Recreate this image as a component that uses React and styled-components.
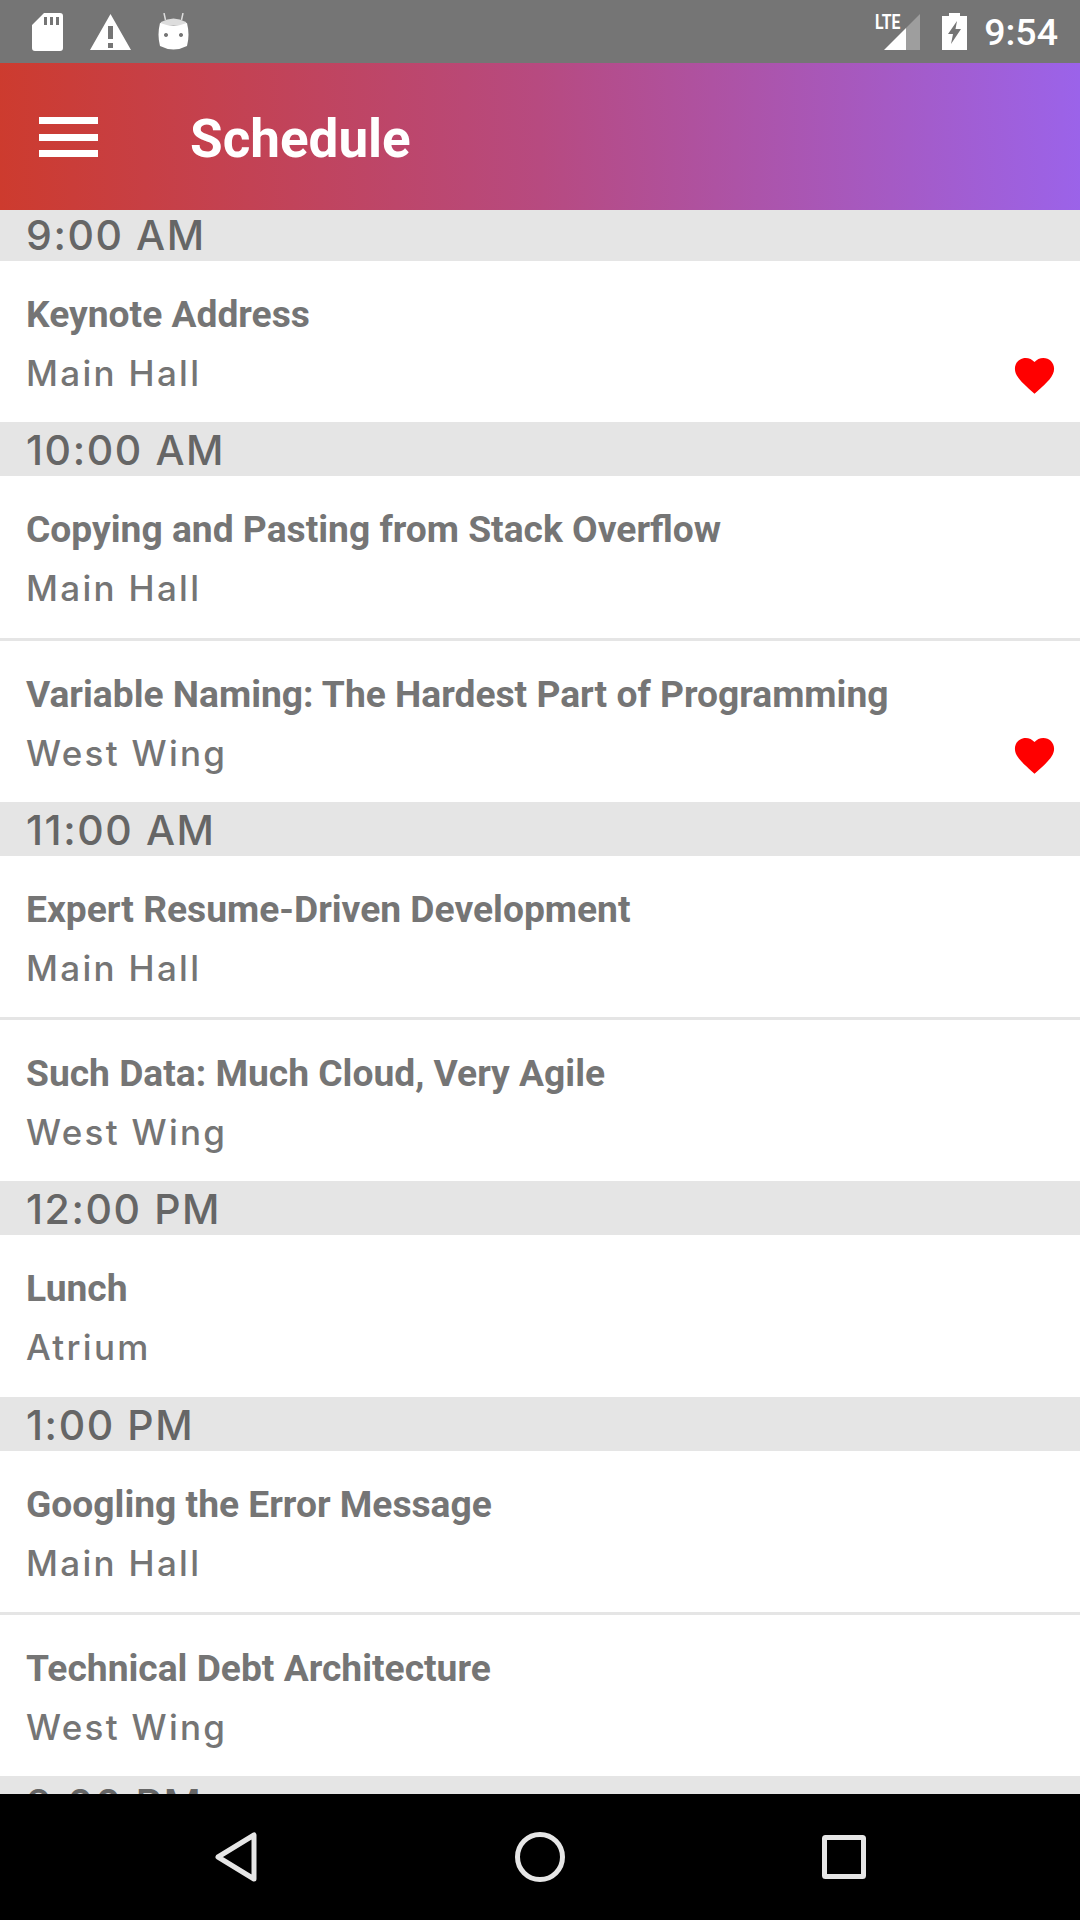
import React from "react";
import styled, { createGlobalStyle } from "styled-components";

const schedule = [
  {
    time: "9:00 AM",
    talks: [{ title: "Keynote Address", room: "Main Hall", liked: true }],
  },
  {
    time: "10:00 AM",
    talks: [
      { title: "Copying and Pasting from Stack Overflow", room: "Main Hall" },
      { title: "Variable Naming: The Hardest Part of Programming", room: "West Wing", liked: true },
    ],
  },
  {
    time: "11:00 AM",
    talks: [
      { title: "Expert Resume-Driven Development", room: "Main Hall" },
      { title: "Such Data: Much Cloud, Very Agile", room: "West Wing" },
    ],
  },
  {
    time: "12:00 PM",
    talks: [{ title: "Lunch", room: "Atrium" }],
  },
  {
    time: "1:00 PM",
    talks: [
      { title: "Googling the Error Message", room: "Main Hall" },
      { title: "Technical Debt Architecture", room: "West Wing" },
    ],
  },
  {
    time: "2:00 PM",
    talks: [],
  },
];

function SdCardIcon() {
  return (
    <svg width="31" height="38" viewBox="0 0 31 38">
      <path
        fillRule="evenodd"
        fill="#fff"
        d="M12 0H28a3 3 0 0 1 3 3V35a3 3 0 0 1-3 3H3a3 3 0 0 1-3-3V12ZM12 4V12H15V4ZM18 4V12H21V4ZM24 4V12H27V4Z"
      />
    </svg>
  );
}

function WarningIcon() {
  return (
    <svg width="41" height="36" viewBox="0 0 41 36">
      <path
        fillRule="evenodd"
        fill="#fff"
        d="M20.5 0L41 36H0ZM18 12V25H23V12ZM18 29V34H23V29Z"
      />
    </svg>
  );
}

function AndroidIcon() {
  return (
    <svg width="31" height="38" viewBox="0 0 31 38">
      <path d="M6 0L7.5 7M25 0L23.5 7" stroke="#ddd" strokeWidth="1.5" fill="none" />
      <path fill="#ddd" d="M3 9Q15.5 2 28 9L29 12H2Z" />
      <path
        fillRule="evenodd"
        fill="#fff"
        d="M2 10Q15.5 15 29 10Q32 22 29 33Q15.5 40 2 33Q-1 22 2 10ZM8 20a2 2 0 1 0 .01 0ZM23 20a2 2 0 1 0 .01 0Z"
      />
    </svg>
  );
}

function SignalIcon() {
  return (
    <svg width="36" height="36" viewBox="0 0 36 36">
      <path fill="#fff" opacity="0.3" d="M36 0V36H22V14Z" />
      <path fill="#fff" d="M22 14V36H0Z" />
    </svg>
  );
}

function BatteryIcon() {
  return (
    <svg width="25" height="37" viewBox="0 0 25 37">
      <path
        fillRule="evenodd"
        fill="#fff"
        d="M7 0H18V3H25V37H0V3H7ZM15 8L6 21H11L9 31L19 16H13.5Z"
      />
    </svg>
  );
}

function MenuIcon() {
  return (
    <svg width="59" height="40" viewBox="0 0 59 40">
      <rect y="0" width="59" height="7" fill="#fff" />
      <rect y="17" width="59" height="7" fill="#fff" />
      <rect y="33" width="59" height="7" fill="#fff" />
    </svg>
  );
}

function HeartIcon() {
  return (
    <svg width="47" height="47" viewBox="0 0 24 24">
      <path
        fill="#ff0000"
        d="M12 21.35l-1.45-1.32C5.4 15.36 2 12.28 2 8.5 2 5.42 4.42 3 7.5 3c1.74 0 3.41.81 4.5 2.09C13.09 3.81 14.76 3 16.5 3 19.58 3 22 5.42 22 8.5c0 3.78-3.4 6.86-8.55 11.54L12 21.35z"
      />
    </svg>
  );
}

function App() {
  return (
    <>
      <GlobalStyle />
      <Screen>
        <StatusBar>
          <StatusGroup>
            <SdCardIcon />
            <WarningIcon />
            <AndroidIcon />
          </StatusGroup>
          <StatusRight>
            <SignalWrap>
              <LteLabel>LTE</LteLabel>
              <SignalIcon />
            </SignalWrap>
            <BatteryIcon />
            <Clock>9:54</Clock>
          </StatusRight>
        </StatusBar>

        <Header>
          <MenuIcon />
          <Title>Schedule</Title>
        </Header>

        <ListViewport>
          <List>
            {schedule.map((section) => (
              <section key={section.time}>
                <SectionHeader>{section.time}</SectionHeader>
                {section.talks.map((talk, i) => (
                  <Talk key={talk.title} divided={i > 0}>
                    <TalkText>
                      <TalkTitle>{talk.title}</TalkTitle>
                      <TalkRoom>{talk.room}</TalkRoom>
                    </TalkText>
                    {talk.liked && (
                      <HeartWrap>
                        <HeartIcon />
                      </HeartWrap>
                    )}
                  </Talk>
                ))}
              </section>
            ))}
          </List>
        </ListViewport>

        <NavBar>
          <NavButton>
            <svg width="42" height="50" viewBox="0 0 42 50">
              <path
                d="M39 3V47L3 25Z"
                fill="none"
                stroke="#e6e6e6"
                strokeWidth="5"
                strokeLinejoin="round"
              />
            </svg>
          </NavButton>
          <NavButton>
            <svg width="50" height="50" viewBox="0 0 50 50">
              <circle cx="25" cy="25" r="22.5" fill="none" stroke="#e6e6e6" strokeWidth="5" />
            </svg>
          </NavButton>
          <NavButton>
            <svg width="44" height="44" viewBox="0 0 44 44">
              <rect
                x="2.5"
                y="2.5"
                width="39"
                height="39"
                rx="1"
                fill="none"
                stroke="#e6e6e6"
                strokeWidth="5"
              />
            </svg>
          </NavButton>
        </NavBar>
      </Screen>
    </>
  );
}

const GlobalStyle = createGlobalStyle`
  html, body {
    margin: 0;
    padding: 0;
    background: #fff;
  }
`;

const Screen = styled.div`
  display: flex;
  flex-direction: column;
  width: 1080px;
  height: 1920px;
  overflow: hidden;
`;

const StatusBar = styled.div`
  display: flex;
  align-items: center;
  justify-content: space-between;
  flex: none;
  height: 63px;
  padding: 0 22px 0 32px;
  box-sizing: border-box;
  background: #757575;
`;

const StatusGroup = styled.div`
  display: flex;
  align-items: center;
  gap: 27px;
`;

const StatusRight = styled.div`
  display: flex;
  align-items: center;
`;

const SignalWrap = styled.div`
  position: relative;
  display: flex;
  margin-right: 22px;
`;

const LteLabel = styled.span`
  position: absolute;
  top: -2px;
  left: -9px;
  font-family: "Roboto", sans-serif;
  font-size: 21px;
  font-weight: 700;
  line-height: 21px;
  color: #fff;
  transform: scaleX(0.75);
  transform-origin: left center;
`;

const Clock = styled.span`
  margin-left: 17px;
  font-family: "Roboto", sans-serif;
  font-size: 37.5px;
  font-weight: 500;
  color: #fff;
`;

const Header = styled.header`
  display: flex;
  align-items: center;
  flex: none;
  height: 147px;
  padding-left: 39px;
  box-sizing: border-box;
  background: linear-gradient(88deg, #cd3b2e 0%, #b74a80 50%, #9b63ea 100%);
`;

const Title = styled.h1`
  margin: 4px 0 0 92px;
  font-family: "Roboto", sans-serif;
  font-size: 53px;
  font-weight: 700;
  color: #fff;
`;

const ListViewport = styled.main`
  flex: 1;
  min-height: 0;
  overflow: hidden;
`;

const List = styled.div`
  margin-top: -3.4px;
`;

const SectionHeader = styled.div`
  height: 54px;
  padding-left: 26px;
  font-family: "Inter", sans-serif;
  font-size: 41px;
  font-weight: 500;
  line-height: 56px;
  letter-spacing: 1.6px;
  color: #666;
  background: #e5e5e5;
`;

const Talk = styled.div`
  display: flex;
  justify-content: space-between;
  height: ${(props) => (props.divided ? "163.9px" : "161.6px")};
  padding: 0 22px 0 26px;
  box-sizing: border-box;
  background: #fff;
  ${(props) => props.divided && "border-top: 3px solid #e5e5e5;"}
`;

const TalkText = styled.div`
  display: flex;
  flex-direction: column;
  padding-top: 31px;
`;

const TalkTitle = styled.div`
  font-family: "Roboto", sans-serif;
  font-size: 37.2px;
  font-weight: 700;
  line-height: 44px;
  color: #757575;
`;

const TalkRoom = styled.div`
  margin-top: 15px;
  font-family: "Inter", sans-serif;
  font-size: 35px;
  font-weight: 500;
  line-height: 44px;
  letter-spacing: 2.3px;
  color: #757575;
`;

const HeartWrap = styled.div`
  align-self: flex-end;
  display: flex;
  padding-bottom: 23px;
`;

const NavBar = styled.nav`
  display: flex;
  justify-content: center;
  align-items: center;
  flex: none;
  height: 126px;
  background: #000;
`;

const NavButton = styled.div`
  display: flex;
  justify-content: center;
  width: 304px;
`;

export default App;
